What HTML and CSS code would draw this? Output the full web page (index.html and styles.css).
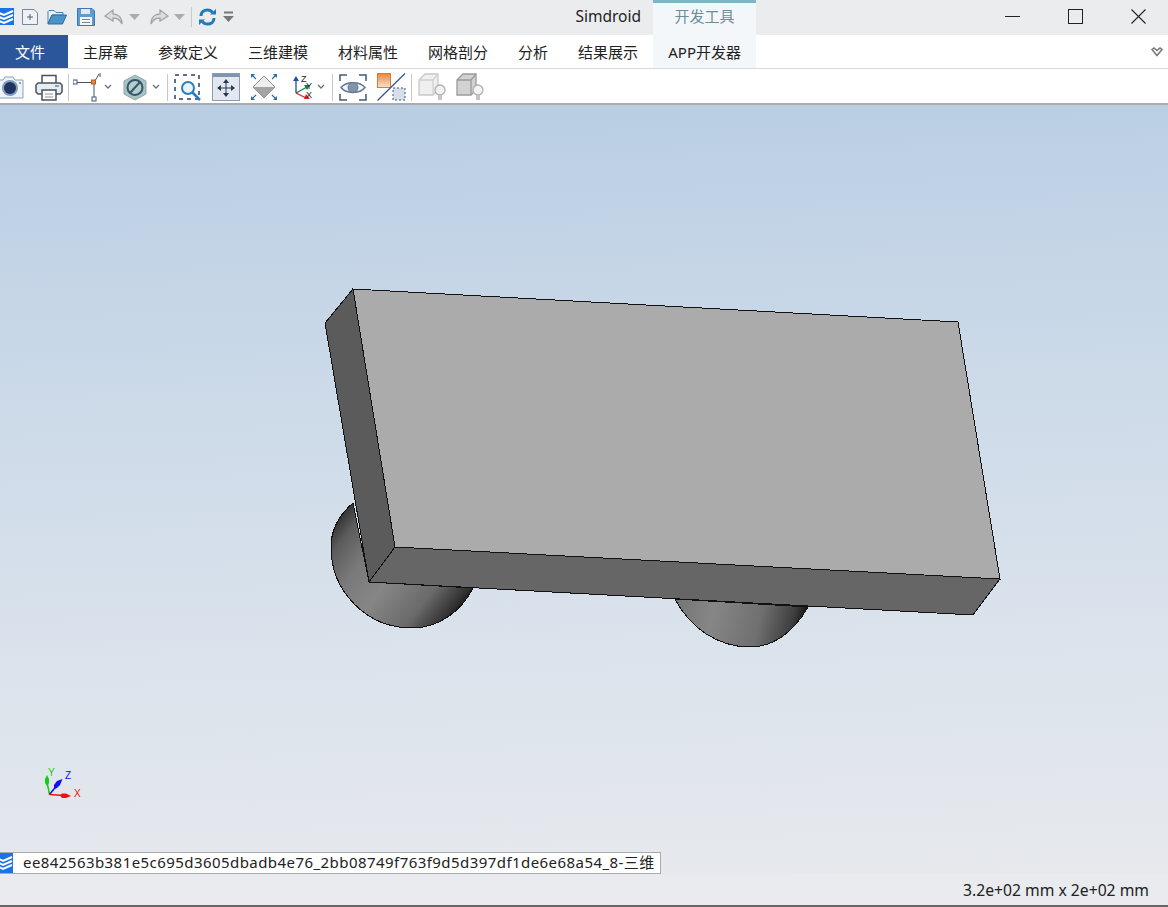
FILE: index.html
```html
<!DOCTYPE html>
<html lang="zh">
<head>
<meta charset="utf-8">
<title>Simdroid</title>
<link rel="stylesheet" href="styles.css">
</head>
<body>
<div class="app">
  <header class="titlebar">
    <div class="title-left">
      <div class="qat">
        <svg class="q-logo" width="14" height="17" viewBox="0 0 14 17"><rect width="14" height="17" fill="#1b74e4"/><path d="M-1 5 L4 7 L13 3 M-1 9 L4 11 L13 7 M-1 13 L4 15 L13 11" fill="none" stroke="#fff" stroke-width="2"/></svg>
        <svg class="q-new" width="18" height="18" viewBox="0 0 18 18"><path d="M1.500 1.500H13L16.500 5V16.500H1.500Z" fill="#eef1f5" stroke="#76879c"/><path d="M9 6V12M6 9H12" stroke="#5a6068"/></svg>
        <svg class="q-open" width="20" height="16" viewBox="0 0 20 16"><path d="M1 14.500V2.500L2 1.500H7L9 3.500H16V6H5L1 14.500" fill="#e9f0f6" stroke="#4a7fa8"/><path d="M1 15H15.500L19.500 6H5Z" fill="#4b94c6" stroke="#2f6f9f"/></svg>
        <svg class="q-save" width="18" height="18" viewBox="0 0 18 18"><path d="M.500 .500H15L17.500 3V17.500H.500Z" fill="#5f9ad2" stroke="#3a78b4"/><rect x="4" y="1" width="9" height="5" fill="#dfe9f3"/><rect x="3" y="9" width="12" height="8" fill="#f2f4f7"/><path d="M5 11.500H13M5 14.500H13" stroke="#7a8794"/></svg>
        <svg class="q-undo" width="20" height="16" viewBox="0 0 20 16"><path d="M9 1 L1 7 L9 12 V9 C13 9 16 10 18 15 C18 8 14 5 9 5Z" fill="#dcdee1" stroke="#a2a6ab" stroke-width="1.300"/></svg>
        <svg class="q-caret" width="11" height="6" viewBox="0 0 11 6"><path d="M0 0H11L5.500 6Z" fill="#a9adb2"/></svg>
        <svg class="q-redo" width="20" height="16" viewBox="0 0 20 16"><path d="M11 1 L19 7 L11 12 V9 C7 9 4 10 2 15 C2 8 6 5 11 5Z" fill="#dcdee1" stroke="#a2a6ab" stroke-width="1.300"/></svg>
        <svg class="q-caret" width="11" height="6" viewBox="0 0 11 6"><path d="M0 0H11L5.500 6Z" fill="#a9adb2"/></svg>
        <span class="q-sep"></span>
        <svg class="q-sync" width="17" height="18" viewBox="0 0 17 18"><path d="M2 8C2 4 5 2 8.500 2C11 2 12.500 3 13.500 4.500" fill="none" stroke="#1f7cb4" stroke-width="3"/><path d="M11 6.500H17V1Z" fill="#1f7cb4"/><path d="M15 10C15 14 12 16 8.500 16C6 16 4.500 15 3.500 13.500" fill="none" stroke="#1f7cb4" stroke-width="3"/><path d="M6 11.500H0V17Z" fill="#1f7cb4"/></svg>
        <svg class="q-more" width="11" height="11" viewBox="0 0 11 11"><path d="M1 1.500H10" stroke="#777" stroke-width="2"/><path d="M0 5H11L5.500 11Z" fill="#777"/></svg>
      </div>
      <span class="app-name">Simdroid</span>
    </div>
    <div class="context-tab">开发工具</div>
    <div class="win-controls">
      <svg class="w-min" width="15" height="15" viewBox="0 0 15 15"><path d="M0 7.500H15" stroke="#222"/></svg>
      <svg class="w-max" width="15" height="15" viewBox="0 0 15 15"><rect x=".5" y=".5" width="14" height="14" fill="none" stroke="#222"/></svg>
      <svg class="w-close" width="15" height="15" viewBox="0 0 15 15"><path d="M.5 .5L14.500 14.500M14.500 .5L.5 14.500" stroke="#222" stroke-width="1.100"/></svg>
    </div>
  </header>

  <nav class="ribbon">
    <a class="tab tab-file">文件</a>
    <a class="tab">主屏幕</a>
    <a class="tab">参数定义</a>
    <a class="tab">三维建模</a>
    <a class="tab">材料属性</a>
    <a class="tab">网格剖分</a>
    <a class="tab">分析</a>
    <a class="tab">结果展示</a>
    <a class="tab tab-dev">APP开发器</a>
    <svg class="collapse" width="12" height="10" viewBox="0 0 12 10"><path d="M1 2.500L3 1L6 3.500L9 1L11 2.500L6 8.500Z" fill="#fff" stroke="#777" stroke-width="1.500"/></svg>
  </nav>

  <div class="toolbar">
    <svg class="t-camera" width="26" height="24" viewBox="0 0 26 24"><path d="M1 5H5L7 2H15L17 5H25V23H1Z" fill="#eef3f8" stroke="#8ba2bb"/><circle cx="12" cy="13" r="8" fill="#7f9dbd"/><circle cx="12" cy="13" r="6" fill="#1f3560"/><rect x="21" y="7" width="2" height="2" fill="#8ba2bb"/></svg>
    <svg class="t-print" width="28" height="27" viewBox="0 0 28 27"><path d="M7 10V1.500H21V10" fill="#fff" stroke="#47525e" stroke-width="1.500"/><path d="M7 20H3L1 18V11L3 9H25L27 11V18L25 20H21" fill="#e7ecf1" stroke="#47525e" stroke-width="1.500"/><rect x="7" y="16" width="14" height="10" fill="#fff" stroke="#47525e" stroke-width="1.500"/><path d="M10 20H18M10 23H18" stroke="#8a949e"/><path d="M20 12H24" stroke="#47525e"/></svg>
    <span class="t-sep"></span>
    <svg class="t-point" width="28" height="30" viewBox="0 0 28 30"><path d="M2 10.500H21V27M21 10.500L26 2" fill="none" stroke="#49525c"/><rect x="0" y="8" width="4" height="4" fill="#fff" stroke="#44557a"/><rect x="19" y="25" width="4" height="4" fill="#fff" stroke="#44557a"/><rect x="18.500" y="8" width="4" height="4" fill="#e8843c" stroke="#b85f20"/><path d="M27 1V5" stroke="#49525c"/></svg>
    <svg class="t-chev" width="8" height="6" viewBox="0 0 8 6"><path d="M1 1L4 4L7 1" fill="none" stroke="#66707a" stroke-width="1.300"/></svg>
    <svg class="t-hex" width="24" height="27" viewBox="0 0 24 27"><path d="M12 1L23 7V20L12 26L1 20V7Z" fill="#a9c2c2" stroke="#8fa9a9"/><circle cx="12" cy="13.500" r="7.500" fill="#b9cccc" stroke="#34566a" stroke-width="2"/><path d="M7 19L17 8" stroke="#34566a" stroke-width="2"/></svg>
    <svg class="t-chev t-chev2" width="8" height="6" viewBox="0 0 8 6"><path d="M1 1L4 4L7 1" fill="none" stroke="#66707a" stroke-width="1.300"/></svg>
    <span class="t-sep t-sep2"></span>
    <svg class="t-zoom" width="27" height="27" viewBox="0 0 27 27"><rect x="1" y="1" width="24" height="24" fill="none" stroke="#27406e" stroke-width="1.500" stroke-dasharray="4 4"/><circle cx="14" cy="14" r="6" fill="#eaf3fa" stroke="#2a7db8" stroke-width="2"/><path d="M18.500 18.500L26 26" stroke="#2a7db8" stroke-width="2.500"/></svg>
    <svg class="t-pan" width="28" height="28" viewBox="0 0 28 28"><rect x=".5" y=".5" width="27" height="27" fill="#e3e7f0" stroke="#8b9bb2"/><rect x="1" y="1" width="26" height="3" fill="#7f94b0"/><path d="M14 8V22M7 15H21" stroke="#26384f"/><path d="M14 6L11 10H17ZM14 24L11 20H17ZM5 15L9 12V18ZM23 15L19 12V18Z" fill="#26384f"/></svg>
    <svg class="t-fit" width="28" height="28" viewBox="0 0 28 28"><path d="M14 3L25 14H3Z" fill="#eeeeee"/><path d="M3 14H25L14 25Z" fill="#a4a4a4"/><path d="M14 3L25 14L14 25L3 14Z" fill="none" stroke="#8f8f8f"/><path d="M1 1H5L1 5ZM27 1H23L27 5ZM1 27H5L1 23ZM27 27H23L27 23Z" fill="#2a6ea8"/><path d="M2 2L6 6M26 2L22 6M2 26L6 22M26 26L22 22" stroke="#2a6ea8" stroke-width="1.200"/></svg>
    <svg class="t-axes" width="23" height="28" viewBox="0 0 23 28"><path d="M6 20V7" stroke="#1f4fa8" stroke-width="1.300"/><path d="M6 3L3 8H9Z" fill="#1f4fa8"/><path d="M6 20L17 14" stroke="#15803d" stroke-width="1.300"/><path d="M20 12L14 12L17 17Z" fill="#15803d"/><path d="M6 20L16 25" stroke="#d92323" stroke-width="1.300"/><path d="M20 26L14 26L16 21Z" fill="#d92323"/><text class="axis-letter" x="11" y="9">Z</text><text class="axis-letter" x="16" y="16">Y</text><text class="axis-letter" x="16" y="25">X</text></svg>
    <svg class="t-chev t-chev3" width="8" height="6" viewBox="0 0 8 6"><path d="M1 1L4 4L7 1" fill="none" stroke="#66707a" stroke-width="1.300"/></svg>
    <span class="t-sep t-sep3"></span>
    <svg class="t-eye" width="28" height="27" viewBox="0 0 28 27"><path d="M1 7V1H8M20 1H27V7M1 20V26H8M20 26H27V20" fill="none" stroke="#44587a" stroke-width="1.500"/><path d="M2 13.500C7 7 21 7 26 13.500C21 20 7 20 2 13.500Z" fill="#f3f6f9" stroke="#5f7690" stroke-width="1.500"/><circle cx="14" cy="13.500" r="5" fill="#8194ac" stroke="#5f7690"/></svg>
    <svg class="t-split" width="29" height="28" viewBox="0 0 29 28"><defs><linearGradient id="orangeFill" x1="0" y1="0" x2="0" y2="1"><stop offset="0" stop-color="#e8883c"/><stop offset="1" stop-color="#f8e3d0"/></linearGradient></defs><rect x=".5" y=".5" width="13" height="14" fill="url(#orangeFill)" stroke="#d87a35"/><path d="M.5 27.500L28 .5" stroke="#3d5588" stroke-width="1.300"/><rect x="16" y="15" width="12" height="12" fill="#d6deea" stroke="#3d5588" stroke-dasharray="2 2"/></svg>
    <span class="t-sep t-sep4"></span>
    <svg class="t-box" width="28" height="28" viewBox="0 0 28 28"><path d="M1 7L7 1H20V17L15 22H1Z" fill="#efefef" stroke="#c8c8c8" stroke-width="1.300"/><path d="M1 7H15V22M15 7L20 1" fill="none" stroke="#d0d0d0" stroke-width="1.300"/><circle cx="22" cy="17" r="5" fill="#f2f2f2" stroke="#b0b0b0" stroke-width="1.300"/><rect x="20" y="22" width="4" height="5" fill="#c4c4c4"/></svg>
    <svg class="t-box t-box2" width="28" height="28" viewBox="0 0 28 28"><path d="M1 7L7 1H20V17L15 22H1Z" fill="#d2d2d2" stroke="#9a9a9a" stroke-width="1.300"/><path d="M1 7H15V22M15 7L20 1" fill="none" stroke="#9a9a9a" stroke-width="1.300"/><circle cx="22" cy="17" r="5" fill="#f2f2f2" stroke="#b0b0b0" stroke-width="1.300"/><rect x="20" y="22" width="4" height="5" fill="#c4c4c4"/></svg>
  </div>

  <main class="viewport">
    <svg class="scene" width="1168" height="769" viewBox="0 105 1168 769">
      <defs>
        <linearGradient id="ballA" gradientUnits="userSpaceOnUse" x1="345" y1="505" x2="472" y2="603">
          <stop offset="0" stop-color="#2c2c2c"/><stop offset=".12" stop-color="#5c5c5c"/><stop offset=".3" stop-color="#7a7a7a"/><stop offset=".5" stop-color="#868686"/><stop offset=".76" stop-color="#6a6a6a"/><stop offset=".92" stop-color="#333"/><stop offset="1" stop-color="#0c0c0c"/>
        </linearGradient>
        <linearGradient id="ballB" gradientUnits="userSpaceOnUse" x1="676" y1="590" x2="808" y2="622">
          <stop offset="0" stop-color="#747474"/><stop offset=".3" stop-color="#868686"/><stop offset=".65" stop-color="#707070"/><stop offset=".88" stop-color="#404040"/><stop offset="1" stop-color="#0c0c0c"/>
        </linearGradient>
      </defs>
      <path class="ball" fill="url(#ballA)" d="M353 503C339 515 331 530 331 547C331 592 367 628 412 628C440 628 462 610 473 588L369 582Z"/>
      <path class="ball" fill="url(#ballB)" d="M675 599C690 628 718 647 750 647C775 647 795 630 808 607Z"/>
      <polygon class="edge" fill="#ababab" points="353,289 958,322 1000,579 395,547"/>
      <polygon class="edge" fill="#5b5b5b" points="353,289 325,323 369,582 395,547"/>
      <polygon class="edge" fill="#666666" points="369,582 395,547 1000,579 973,615"/>
      <g class="triad">
        <path d="M49.500 794.500L47 782" stroke="#0fd00f" stroke-width="1.500"/>
        <path d="M47 775L45 779V783L47 786L49 783V779Z" fill="#0fd00f"/>
        <path d="M49.500 794.500L58 784" stroke="#1010f0" stroke-width="1.500"/>
        <path d="M62.500 779L57 781L54 785L54 789L57 788L60 785Z" fill="#1010f0"/>
        <path d="M49.500 794.500L64 795.500" stroke="#f01010" stroke-width="1.500"/>
        <path d="M71 796L66 793.500H62L60 795.500L62 798H66Z" fill="#f01010"/>
        <text class="t-y" x="48" y="776">Y</text>
        <text class="t-z" x="65" y="779">Z</text>
        <text class="t-x" x="74" y="797">X</text>
      </g>
    </svg>
    <div class="doc-tabs">
      <svg class="doc-icon" width="13" height="20" viewBox="0 0 13 20"><rect width="13" height="20" fill="#1b74e4"/><path d="M-1 6L3 8L12 4M-1 10L3 12L12 8M-1 14L3 16L12 12" fill="none" stroke="#fff" stroke-width="2"/></svg>
      <div class="doc-tab">ee842563b381e5c695d3605dbadb4e76_2bb08749f763f9d5d397df1de6e68a54_8-三维</div>
    </div>
  </main>

  <footer class="statusbar">3.2e+02 mm x 2e+02 mm</footer>
</div>
</body>
</html>
```
FILE: styles.css
```css
* { box-sizing: border-box; }
html, body { margin: 0; height: 100%; overflow: hidden; }
body { font-family: "Noto Sans", "Noto Sans CJK SC", sans-serif; color: #222; background: #fff; }
svg { display: block; flex: none; }

.app { display: flex; flex-direction: column; width: 1168px; height: 907px; }

/* title bar */
.titlebar { flex: none; height: 35px; display: flex; background: #ebecee; }
.title-left { width: 653px; display: flex; align-items: center; justify-content: space-between; padding: 0 12px 2px 0; }
.qat { display: flex; align-items: center; }
.q-new { margin-left: 7px; }
.q-open { margin-left: 8px; }
.q-save { margin-left: 10px; }
.q-undo { margin-left: 9px; }
.q-caret { margin-left: 5px; }
.q-redo { margin-left: 9px; }
.q-sep { width: 1px; height: 20px; margin-left: 6px; background: #c8cbce; }
.q-sync { margin-left: 7px; }
.q-more { margin-left: 7px; }
.app-name { font-size: 15.5px; line-height: 33px; }
.context-tab { width: 103px; border-top: 3px solid #7fb5c4; background: #f3f7fa; color: #6b8d9c; font-size: 15px; line-height: 27px; text-align: center; }
.win-controls { flex: 1; display: flex; align-items: center; justify-content: flex-end; padding: 0 22px 3px 0; }
.win-controls .w-max { margin-left: 48px; }
.win-controls .w-close { margin-left: 48px; }

/* ribbon tabs */
.ribbon { flex: none; height: 34px; display: flex; align-items: stretch; background: #fff; border-bottom: 1px solid #d8d8d8; }
.tab { padding: 0 15px; font-size: 15px; line-height: 34px; white-space: nowrap; }
.tab-file { padding-right: 23px; background: #2b579a; color: #fff; }
.tab-dev { width: 103px; padding: 0; text-align: center; background: #f3f7fa; }
.collapse { margin: 12px 5px 0 auto; }

/* icon toolbar */
.toolbar { flex: none; height: 36px; display: flex; align-items: center; background: #fff; border-bottom: 2px solid #a9abad; padding-top: 2px; }
.t-camera { margin-left: -2px; }
.t-print { margin-left: 11px; }
.t-sep { width: 1px; height: 27px; margin-left: 5px; background: #c6c8ca; }
.t-point { margin-left: 4px; }
.t-chev { margin-left: 3px; }
.t-hex { margin-left: 11px; }
.t-chev2 { margin-left: 5px; }
.t-sep2 { margin-left: 7px; }
.t-zoom { margin-left: 6px; }
.t-pan { margin-left: 11px; }
.t-fit { margin-left: 10px; }
.t-axes { margin-left: 12px; }
.t-chev3 { margin-left: 4px; }
.t-sep3 { margin-left: 7px; }
.t-eye { margin-left: 6px; }
.t-split { margin-left: 10px; }
.t-sep4 { margin-left: 5px; }
.t-box { margin-left: 6px; }
.t-box2 { margin-left: 10px; }
.axis-letter { font: 9px "Liberation Sans", sans-serif; fill: #222; }

/* 3D view */
.viewport { flex: 1; position: relative; background: linear-gradient(178deg, #b8cde3 0%, #c6d6e7 25%, #dbe3ec 70%, #e7e9ed 100%); }
.scene { position: absolute; left: 0; top: 0; }
.ball { stroke: #111; stroke-width: 1; shape-rendering: crispEdges; }
.edge { stroke: #111; stroke-width: 1; shape-rendering: crispEdges; }
.triad text { font: 10px "Liberation Sans", sans-serif; }
.t-y { fill: #0fd00f; }
.t-z { fill: #1010f0; }
.t-x { fill: #f01010; }

/* document tabs */
.doc-tabs { position: absolute; left: 0; bottom: 0; display: flex; height: 22px; border-top: 1px solid #a8aaac; border-bottom: 1px solid #a8aaac; background: #fff; }
.doc-tab { width: 648px; padding-left: 10px; border-right: 1px solid #a8aaac; font-size: 15px; letter-spacing: .44px; line-height: 19px; white-space: nowrap; }

/* status bar */
.statusbar { flex: none; height: 33px; padding-right: 19px; background: #e9ebee; border-bottom: 2px solid #666; font-size: 15.7px; line-height: 32px; text-align: right; }
```
